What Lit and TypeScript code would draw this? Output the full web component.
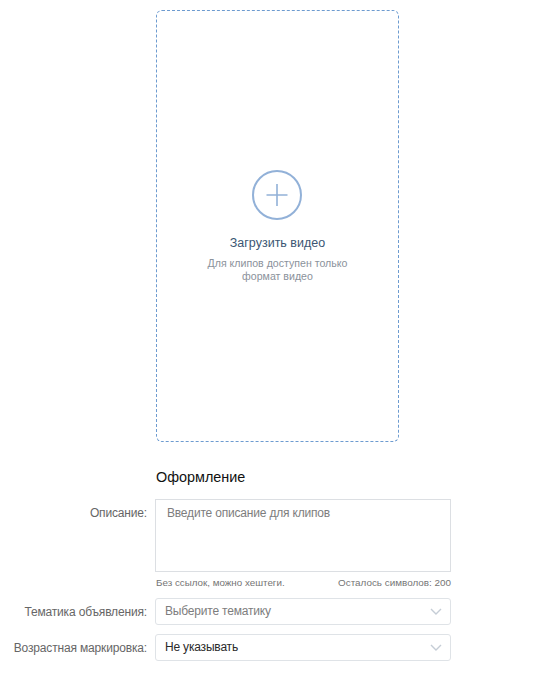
import { LitElement, html, css } from "lit";
import { customElement } from "lit/decorators.js";

const chevron = html`<svg class="chev" width="12" height="7" viewBox="0 0 12 7" fill="none"><path d="M1 1l5 5 5-5" stroke="#c5cdd6" stroke-width="1.4"/></svg>`;

@customElement("app-root")
export class AppRoot extends LitElement {
  static styles = css`
    :host { display: block; width: 537px; height: 678px; overflow: hidden; background: #fff; font-family: "Liberation Sans", Arial, sans-serif; font-size: 12px; letter-spacing: -0.19px; color: #000; }
    .page { display: flex; flex-direction: column; padding-top: 10px; }
    .drop { box-sizing: border-box; margin-left: 156px; width: 243px; height: 432px; border: 1px dashed #6d9bd0; border-radius: 6px; display: flex; flex-direction: column; align-items: center; padding-top: 159px; }
    .plus { display: block; margin-right: 1px; }
    .title { margin-top: 15px; font-size: 12.5px; letter-spacing: 0; line-height: 16px; color: #3b5673; }
    .sub { margin-top: 6px; font-size: 10.6px; letter-spacing: 0; line-height: 13px; color: #8b929b; text-align: center; }
    h2 { margin: 26px 0 0 156px; font-weight: 400; font-size: 14.4px; letter-spacing: 0; line-height: 18px; color: #111; }
    .form { margin-top: 13px; display: grid; grid-template-columns: 147px 296px; column-gap: 8px; }
    .label { text-align: right; color: #666; white-space: nowrap; line-height: 16px; letter-spacing: -0.16px; }
    .label.top { padding-top: 6px; }
    .label.mid { align-self: center; }
    .area { box-sizing: border-box; height: 73px; border: 1px solid #dcdfe3; padding: 5px 11px; color: #7d7d7d; line-height: 16px; }
    .hint { grid-column: 2; display: flex; justify-content: space-between; font-size: 9.8px; letter-spacing: 0; line-height: 12px; color: #757575; margin: 5px 0 9px 1px; }
    .hint span:last-child { font-size: 9.9px; }
    .sel { box-sizing: border-box; height: 27px; border: 1px solid #dfe3e7; border-radius: 3px; display: flex; align-items: center; justify-content: space-between; padding: 0 8px 1px 9px; color: #7d7d7d; }
    .sel.val { color: #2a2a2a; }
    .gap { grid-column: 1 / 3; height: 9px; }
  `;

  render() {
    return html`<div class="page">
      <div class="drop">
        <svg class="plus" width="50" height="50" viewBox="0 0 50 50" fill="none" stroke="#92b1d8">
          <circle cx="25" cy="25" r="24" stroke-width="2"/>
          <path d="M25 14v22M14.5 25h21" stroke-width="1.6"/>
        </svg>
        <div class="title">Загрузить видео</div>
        <div class="sub">Для клипов доступен только<br>формат видео</div>
      </div>
      <h2>Оформление</h2>
      <div class="form">
        <div class="label top">Описание:</div>
        <div class="area">Введите описание для клипов</div>
        <div class="hint"><span>Без ссылок, можно хештеги.</span><span>Осталось символов: 200</span></div>
        <div class="label mid">Тематика объявления:</div>
        <div class="sel"><span>Выберите тематику</span>${chevron}</div>
        <div class="gap"></div>
        <div class="label mid">Возрастная маркировка:</div>
        <div class="sel val"><span>Не указывать</span>${chevron}</div>
      </div>
    </div>`;
  }
}
